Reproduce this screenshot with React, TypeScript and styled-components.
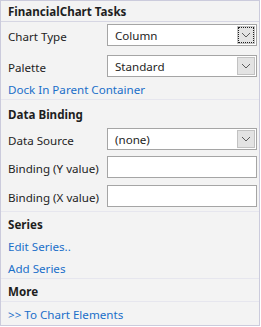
import styled, { createGlobalStyle } from 'styled-components'

const GlobalStyle = createGlobalStyle`
	html, body {
		margin: 0;
		padding: 0;
		background: #ffffff;
	}
	body {
		font-family: 'Noto Sans', 'Open Sans', sans-serif;
		font-size: 11.6px;
		color: #1e1e1e;
	}
`

const Panel = styled.div`
	box-sizing: border-box;
	width: 260px;
	height: 326px;
	background: #f3f3f3;
	border: 1px solid #cbcbdc;
	display: flex;
	flex-direction: column;
`

const Header = styled.div`
	box-sizing: border-box;
	height: 21px;
	padding: 2px 0 0 7px;
	line-height: 18px;
	font-weight: 700;
	border-bottom: 1px solid #d6d6e3;
`

const Section = styled.div<{ $pt?: number; $pb?: number; $last?: boolean }>`
	display: flex;
	flex-direction: column;
	padding: ${({ $pt = 0 }) => $pt}px 2px ${({ $pb = 0 }) => $pb}px 7px;
	border-bottom: ${({ $last }) => ($last ? 'none' : '1px solid #e6e6ee')};
`

const Title = styled.div`
	box-sizing: border-box;
	height: 22px;
	padding-top: 4px;
	line-height: 18px;
	font-weight: 700;
`

const Link = styled.a`
	box-sizing: border-box;
	display: block;
	height: 22px;
	padding-top: 4px;
	line-height: 18px;
	color: #1a6fc9;
	text-decoration: none;
	cursor: pointer;
`

const Row = styled.div<{ $mt?: number }>`
	display: grid;
	grid-template-columns: 99px 150px;
	align-items: center;
	margin-top: ${({ $mt = 0 }) => $mt}px;
	height: 22px;
`

const Label = styled.span`
	padding-top: 2px;
`

const Field = styled.div`
	box-sizing: border-box;
	height: 22px;
	background: #ffffff;
	border: 1px solid #a5a5a5;
	display: flex;
	align-items: center;
	padding-left: 7px;
	padding-right: 1px;
`

const Value = styled.span`
	flex: 1;
	padding-top: 1px;
`

const DropButton = styled.div<{ $focused?: boolean }>`
	box-sizing: border-box;
	width: 18px;
	height: 18px;
	background: #e3e3e3;
	border: 1px solid #c2c2c2;
	display: flex;
	align-items: center;
	justify-content: center;
	position: relative;

	&::after {
		content: '';
		display: ${({ $focused }) => ($focused ? 'block' : 'none')};
		position: absolute;
		inset: 0;
		border: 1px dotted #1e1e1e;
	}
`

const Chevron = () => (
	<svg width="10" height="6" viewBox="0 0 10 6">
		<path d="M1 1 L5 5 L9 1" fill="none" stroke="#5c5c5c" strokeWidth="1" />
	</svg>
)

const Combo = ({ value, focused }: { value: string; focused?: boolean }) => (
	<Field>
		<Value>{value}</Value>
		<DropButton $focused={focused}>
			<Chevron />
		</DropButton>
	</Field>
)

export default function App() {
	return (
		<>
			<GlobalStyle />
			<Panel>
				<Header>FinancialChart Tasks</Header>

				<Section $pt={2}>
					<Row>
						<Label>Chart Type</Label>
						<Combo value="Column" focused />
					</Row>
					<Row $mt={9}>
						<Label>Palette</Label>
						<Combo value="Standard" />
					</Row>
					<Link>Dock In Parent Container</Link>
				</Section>

				<Section $pt={2} $pb={4}>
					<Title>Data Binding</Title>
					<Row $mt={4}>
						<Label>Data Source</Label>
						<Combo value="(none)" />
					</Row>
					<Row $mt={6}>
						<Label>Binding (Y value)</Label>
						<Field />
					</Row>
					<Row $mt={7}>
						<Label>Binding (X value)</Label>
						<Field />
					</Row>
				</Section>

				<Section>
					<Title>Series</Title>
					<Link>Edit Series..</Link>
					<Link>Add Series</Link>
				</Section>

				<Section>
					<Title>More</Title>
				</Section>

				<Section $last>
					<Link>&gt;&gt; To Chart Elements</Link>
				</Section>
			</Panel>
		</>
	)
}
